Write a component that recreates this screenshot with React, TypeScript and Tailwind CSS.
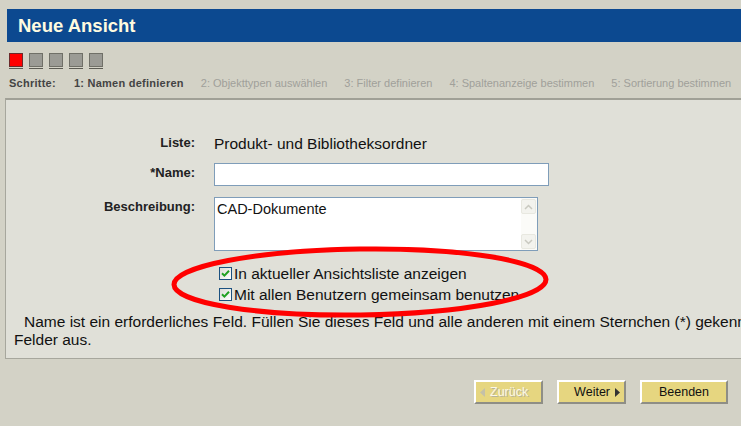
import { useState } from 'react';

const steps = [
    { label: '1: Namen definieren', active: true },
    { label: '2: Objekttypen auswählen', active: false },
    { label: '3: Filter definieren', active: false },
    { label: '4: Spaltenanzeige bestimmen', active: false },
    { label: '5: Sortierung bestimmen', active: false },
];

function Check({ checked, onChange }: { checked: boolean; onChange: () => void }) {
    return (
        <button
            onClick={onChange}
            className="flex h-[13px] w-[13px] shrink-0 items-center justify-center border border-[#1c5180] bg-gradient-to-br from-[#dcdcd6] to-white"
        >
            {checked && (
                <svg width="9" height="9" viewBox="0 0 9 9">
                    <path d="M1 4.2 L3.4 6.6 L8 1.8" fill="none" stroke="#21a121" strokeWidth="2" />
                </svg>
            )}
        </button>
    );
}

function ScrollArrow({ up }: { up?: boolean }) {
    return (
        <div className="flex h-[15px] w-[15px] items-center justify-center rounded-[2px] border border-[#e8e8e0] bg-[#f3f3ee]">
            <svg width="9" height="6" viewBox="0 0 9 6">
                <path d={up ? 'M1 5 L4.5 1.5 L8 5' : 'M1 1 L4.5 4.5 L8 1'} fill="none" stroke="#c9c9c0" strokeWidth="1.5" />
            </svg>
        </div>
    );
}

function WizardButton({ children, disabled, className }: { children: React.ReactNode; disabled?: boolean; className: string }) {
    return (
        <button
            className={
                'flex h-[24px] items-center border-2 border-t-white border-l-white border-b-[#8e8e86] border-r-[#8e8e86] bg-[#e6d680] text-[12.5px] ' +
                (disabled ? 'text-[#fbf8e6] [text-shadow:1px_1px_0_#b8b49a] ' : 'text-[#111] ') +
                className
            }
            disabled={disabled}
        >
            {children}
        </button>
    );
}

export default function App() {
    const [showInList, setShowInList] = useState(true);
    const [shared, setShared] = useState(true);

    return (
        <div className="relative h-[426px] w-[741px] overflow-hidden bg-[#d3d2c6] font-['Liberation_Sans',Arial,sans-serif]">
            <div className="ml-[7px] mt-[9px] flex h-[33px] items-center bg-[#0c4990] pl-[11px]">
                <h1 className="text-[18.5px] font-bold text-[#fffbe0]">Neue Ansicht</h1>
            </div>

            <div className="ml-[9px] mt-[11px] flex gap-[6px]">
                {steps.map((s, i) => (
                    <div key={i} className="border-b border-b-[#5c5c54] pb-[1px]">
                        <div
                            className={
                                'h-[14px] w-[14px] border ' +
                                (s.active ? 'border-[#6b2a2a] bg-[#ff0000]' : 'border-[#707068] bg-[#9b9b95]')
                            }
                        />
                    </div>
                ))}
            </div>

            <div className="ml-[9px] mt-[6px] flex gap-[17px] whitespace-nowrap text-[11px]">
                <span className="mr-[1px] font-bold tracking-[0.25px] text-[#444]">Schritte:</span>
                {steps.map((s, i) => (
                    <span key={i} className={s.active ? 'font-bold tracking-[0.25px] text-[#444]' : 'text-[#a0a09a]'}>
                        {s.label}
                    </span>
                ))}
            </div>

            <div className="ml-[5px] mt-[6px] w-[900px] border border-t-2 border-[#a7a79d] border-t-[#a0a096] bg-[#e0e0d8] pb-[9px] pt-[33px]">
                <div className="grid grid-cols-[189px_auto] items-center gap-x-[19px] gap-y-[11px]">
                    <span className="text-right text-[13px] font-bold text-[#222]">Liste:</span>
                    <span className="-mb-[3px] text-[15.5px] leading-[18px] text-[#111]">Produkt- und Bibliotheksordner</span>

                    <span className="-mt-[4px] text-right text-[13px] font-bold text-[#222]">*Name:</span>
                    <input className="h-[23px] w-[335px] border border-[#7f9db9] bg-white px-[2px] text-[14px] outline-none" />

                    <span className="self-start text-right text-[13px] font-bold text-[#222]">Beschreibung:</span>
                    <div className="flex h-[54px] w-[324px] border border-[#7f9db9] bg-white">
                        <textarea
                            className="flex-1 resize-none px-[2px] pt-[3px] text-[14.5px] leading-[17px] text-[#111] outline-none"
                            defaultValue="CAD-Dokumente"
                        />
                        <div className="flex w-[16px] flex-col justify-between bg-[#fbfbf8] pb-[1px] pt-[1px]">
                            <ScrollArrow up />
                            <ScrollArrow />
                        </div>
                    </div>

                    <span />
                    <div className="mt-[3px] flex flex-col gap-[4px] pl-[5px] text-[15.5px] leading-[17px] text-[#111]">
                        <label className="flex items-center gap-[2px] whitespace-nowrap">
                            <Check checked={showInList} onChange={() => setShowInList(!showInList)} />
                            In aktueller Ansichtsliste anzeigen
                        </label>
                        <label className="flex items-center gap-[2px] whitespace-nowrap">
                            <Check checked={shared} onChange={() => setShared(!shared)} />
                            Mit allen Benutzern gemeinsam benutzen
                        </label>
                    </div>
                </div>

                <p className="mt-[10px] w-[850px] pl-[8px] indent-[10px] text-[15.5px] leading-[18px] text-[#111]">
                    Name ist ein erforderliches Feld. Füllen Sie dieses Feld und alle anderen mit einem Sternchen (*) gekennzeichneten Felder aus.
                </p>
            </div>

            <div className="mr-[13px] mt-[21px] flex justify-end gap-[14px]">
                <WizardButton disabled className="w-[69px] gap-[5px] pl-[4px]">
                    <svg width="5" height="9" viewBox="0 0 5 9">
                        <path d="M5 0 L0 4.5 L5 9 Z" fill="#c4c0a8" />
                    </svg>
                    Zurück
                </WizardButton>
                <WizardButton className="w-[69px] justify-end gap-[5px] pr-[4px]">
                    Weiter
                    <svg width="5" height="9" viewBox="0 0 5 9">
                        <path d="M0 0 L5 4.5 L0 9 Z" fill="#333" />
                    </svg>
                </WizardButton>
                <WizardButton className="w-[88px] justify-center">Beenden</WizardButton>
            </div>

            <svg className="pointer-events-none absolute left-[169px] top-[243px]" width="384" height="78" viewBox="0 0 384 78">
                <ellipse cx="191" cy="39" rx="186" ry="33" fill="none" stroke="#ff0000" strokeWidth="5" transform="rotate(-0.8 191 39)" />
            </svg>
        </div>
    );
}
